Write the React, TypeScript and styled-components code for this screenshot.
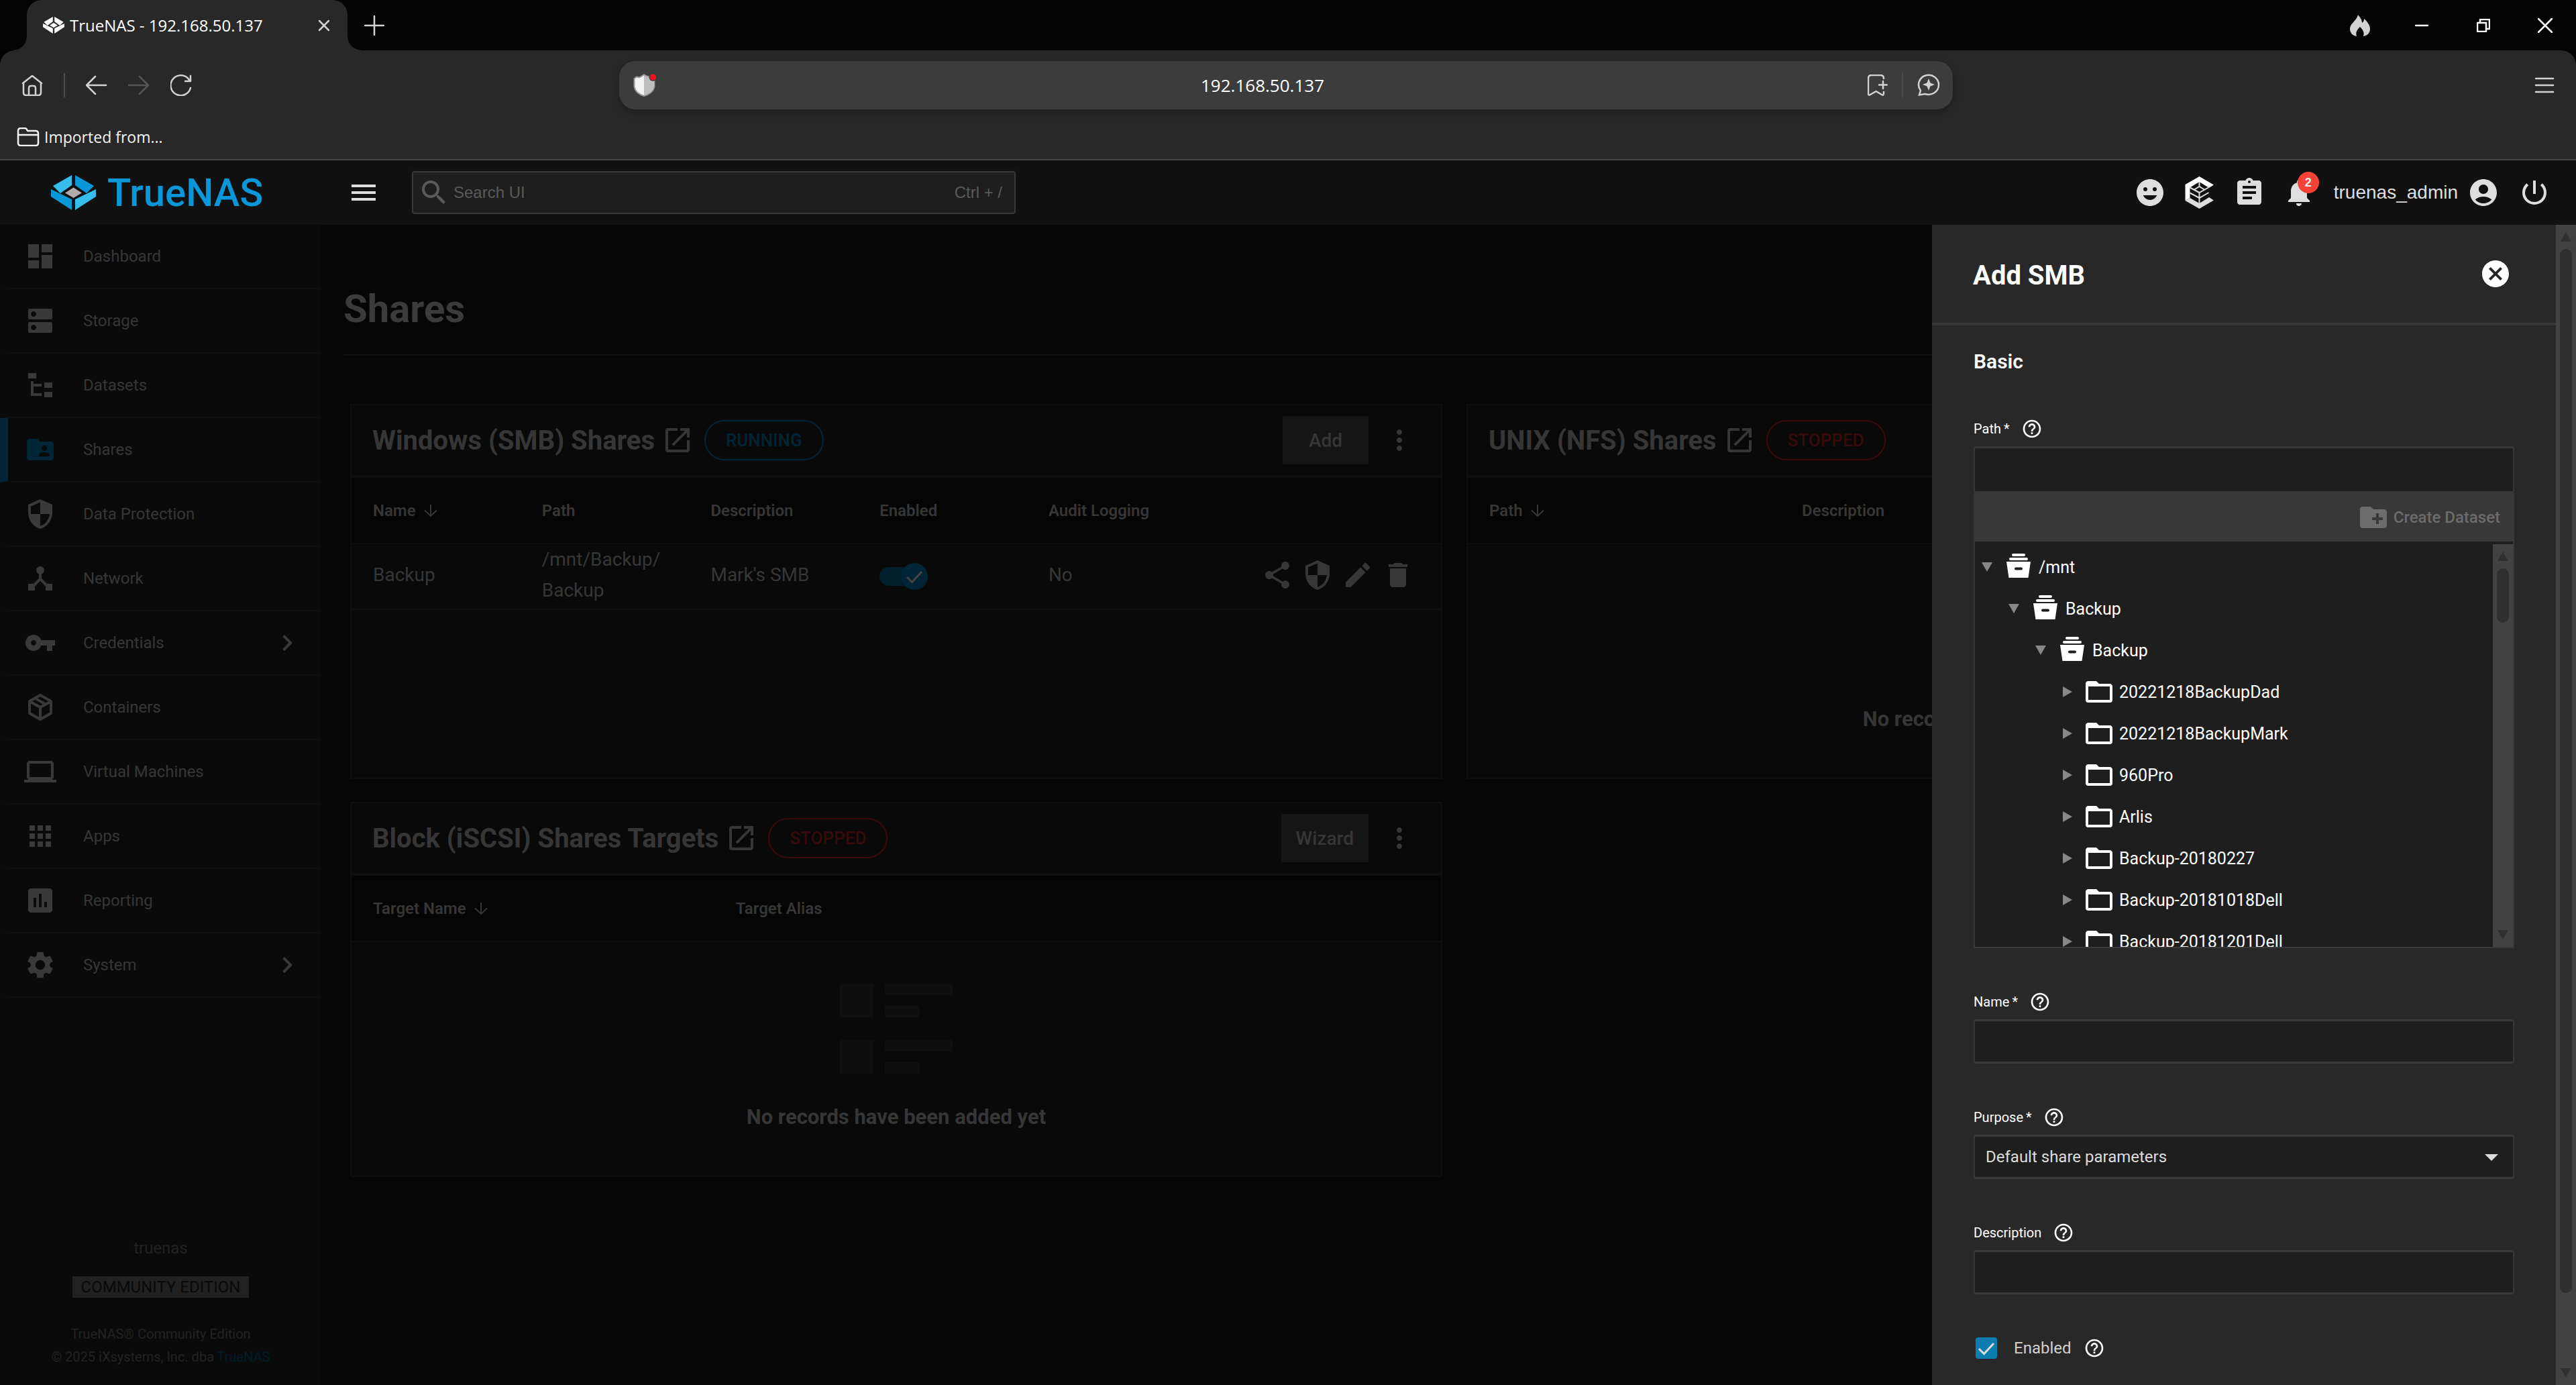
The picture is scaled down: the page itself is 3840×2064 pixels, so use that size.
import React from "react";
import styled, { createGlobalStyle, css } from "styled-components";
import {
  MdAccountCircle,
  MdApps,
  MdArrowDropDown,
  MdAssessment,
  MdAssignment,
  MdCancel,
  MdChevronRight,
  MdComputer,
  MdCreateNewFolder,
  MdDashboard,
  MdDelete,
  MdDeviceHub,
  MdDns,
  MdEdit,
  MdFolderShared,
  MdHelpOutline,
  MdMenu,
  MdMoreVert,
  MdNotifications,
  MdOpenInNew,
  MdPowerSettingsNew,
  MdSearch,
  MdSecurity,
  MdSettings,
  MdShare,
  MdVpnKey,
} from "react-icons/md";

const c = {
  chrome: "#282828",
  chromeIcon: "#d2d2d2",
  topBar: "#111111",
  topIcon: "#dedede",
  main: "#060606",
  side: "#0a0a0a",
  card: "#090909",
  tableHead: "#050505",
  line: "#0e0e0e",
  dimText: "#363636",
  dimIcon: "#393939",
  dimBlue: "#002536",
  dimRed: "#380a0a",
  panel: "#282828",
  field: "#1e1e1e",
  fieldLine: "#383838",
  track: "#424242",
  thumb: "#303030",
};

const bodyFont = `Roboto, "Liberation Sans", sans-serif`;
const chromeFont = `"Open Sans", "Noto Sans", sans-serif`;

const GlobalStyle = createGlobalStyle`
  *, *::before, *::after { box-sizing: border-box; }
  body { margin: 0; background: #000; font-family: ${bodyFont}; font-size: 24px; overflow: hidden; }
  button, input, select { font: inherit; color: inherit; background: none; border: 0; margin: 0; padding: 0; border-radius: 0; }
  h1, h2, h3, p, ul { margin: 0; padding: 0; }
  ul { list-style: none; }
  a { color: inherit; text-decoration: none; }
  svg { display: block; flex: none; }
`;

const Shell = styled.div`
  display: flex;
  flex-direction: column;
  height: 100vh;
`;

/* ---------- browser window ---------- */

const TabStrip = styled.header`
  display: flex;
  align-items: stretch;
  height: 75px;
  padding-left: 40px;
  background: #040404;
  color: #fff;
  font-family: ${chromeFont};
`;

const Tab = styled.div`
  position: relative;
  display: flex;
  align-items: center;
  gap: 8px;
  width: 478px;
  padding: 0 24px;
  font-size: 24px;
  background: ${c.chrome};
  border-radius: 22px 22px 0 0;
  &::before,
  &::after {
    content: "";
    position: absolute;
    bottom: 0;
    width: 20px;
    height: 20px;
  }
  &::before {
    left: -20px;
    background: radial-gradient(circle at 0 0, transparent 19px, ${c.chrome} 20px);
  }
  &::after {
    right: -20px;
    background: radial-gradient(circle at 100% 0, transparent 19px, ${c.chrome} 20px);
  }
`;

const TabTitle = styled.span`
  flex: 1;
  white-space: nowrap;
`;

const PlainButton = styled.button`
  display: flex;
  align-items: center;
  justify-content: center;
  color: ${c.chromeIcon};
  &:disabled {
    color: #555;
  }
`;

const NewTab = styled(PlainButton)`
  width: 80px;
`;

const WindowControls = styled.div`
  display: flex;
  margin-left: auto;
`;

const WindowButton = styled(PlainButton)`
  width: 92px;
  color: #fff;
`;

const ToolArea = styled.div`
  background: ${c.chrome};
  border-bottom: 2px solid #444;
  border-radius: 22px 22px 0 0;
  font-family: ${chromeFont};
`;

const NavRow = styled.div`
  display: grid;
  grid-template-columns: 923fr 1988fr 929fr;
  align-items: center;
  height: 104px;
`;

const NavButtons = styled.nav`
  display: flex;
  align-items: center;
  gap: 31px;
  padding-left: 32px;
`;

const Rule = styled.span`
  width: 2px;
  height: 36px;
  background: #4a4a4a;
`;

const AddressBar = styled.div`
  display: flex;
  align-items: center;
  height: 72px;
  padding: 0 19px 0 21px;
  border-radius: 24px;
  background: #3c3c3c;
  box-shadow: 0 4px 12px rgba(0, 0, 0, 0.25);
`;

const AddressInput = styled.input`
  flex: 1;
  min-width: 0;
  text-align: center;
  color: #fff;
  font-size: 26px;
`;

const AddressTools = styled.div`
  display: flex;
  align-items: center;
  gap: 21px;
`;

const MenuSlot = styled.div`
  display: flex;
  justify-content: flex-end;
  padding-right: 32px;
`;

const Bookmarks = styled.div`
  display: flex;
  height: 58px;
  padding: 0 25px 8px;
`;

const Bookmark = styled.a`
  display: flex;
  align-items: center;
  gap: 7px;
  color: #f4f4f4;
  font-size: 23px;
`;

/* ---------- application top bar ---------- */

const TopBar = styled.header`
  display: flex;
  align-items: center;
  height: 96px;
  padding-right: 25px;
  background: ${c.topBar};
  color: ${c.topIcon};
  font-family: "Liberation Sans", Arial, sans-serif;
`;

const Brand = styled.a`
  display: flex;
  align-items: center;
  gap: 17px;
  width: 518px;
  padding-left: 76px;
  color: #0a97d9;
  font-family: ${bodyFont};
  font-size: 58px;
  font-weight: 500;
  line-height: 60px;
`;

const IconButton = styled.button<{ $w?: number }>`
  display: flex;
  align-items: center;
  justify-content: center;
  width: ${(p) => p.$w ?? 48}px;
  height: 48px;
`;

const SearchBox = styled.label`
  display: flex;
  align-items: center;
  gap: 5px;
  width: 900px;
  height: 64px;
  margin: 0 auto 0 48px;
  padding: 0 18px 0 7px;
  border: 2px solid #3a3a3a;
  border-radius: 4px;
  background: ${c.field};
  color: #5a5a5a;
  input {
    flex: 1;
    min-width: 0;
  }
  input::placeholder {
    color: #5a5a5a;
    opacity: 1;
  }
`;

const BellWrap = styled.span`
  position: relative;
`;

const Badge = styled.span`
  position: absolute;
  top: -7px;
  right: -6px;
  width: 32px;
  height: 32px;
  border-radius: 50%;
  background: #f44336;
  color: #eee;
  font-size: 18px;
  font-weight: 700;
  line-height: 32px;
  text-align: center;
`;

const UserName = styled.span`
  margin: 0 14px 0 15px;
  font-size: 28px;
`;

const PowerSlot = styled.span`
  margin-left: 15px;
`;

/* ---------- sidebar ---------- */

const Body = styled.div`
  position: relative;
  display: flex;
  flex: 1;
  min-height: 0;
`;

const Sidebar = styled.aside`
  display: flex;
  flex-direction: column;
  justify-content: space-between;
  flex: 0 0 479px;
  background: ${c.side};
  color: ${c.dimText};
`;

const SideItem = styled.a<{ $active?: boolean }>`
  display: flex;
  align-items: center;
  height: 96px;
  padding: 0 27px 0 24px;
  border-left: 12px solid ${(p) => (p.$active ? c.dimBlue : "transparent")};
  border-bottom: 2px solid ${c.line};
  svg {
    color: ${(p) => (p.$active ? c.dimBlue : c.dimIcon)};
  }
`;

const SideLabel = styled.span`
  flex: 1;
  margin-left: 40px;
`;

const SideFooter = styled.footer`
  display: flex;
  flex-direction: column;
  align-items: center;
  padding-bottom: 25px;
  color: #222;
  line-height: 32px;
`;

const Edition = styled.span`
  margin: 26px 0 37px;
  padding: 0 13px;
  background: #212121;
  color: ${c.side};
`;

const Copyright = styled.p`
  font-size: 20px;
  line-height: 34px;
  text-align: center;
  a {
    color: #001c28;
  }
`;

/* ---------- shares page ---------- */

const Main = styled.main`
  flex: 1;
  min-width: 0;
  padding: 0 26px 0 33px;
  background: ${c.main};
  color: ${c.dimText};
  overflow: hidden;
`;

const PageTitle = styled.h1`
  padding: 92px 0 35px;
  border-bottom: 2px solid #101010;
  color: #3b3b3b;
  font-size: 58px;
  font-weight: 700;
  line-height: 66px;
`;

const CardGrid = styled.div`
  display: grid;
  grid-template-columns: 1fr 1fr;
  gap: 34px 36px;
  padding: 72px 0 0 10px;
`;

const Card = styled.section`
  min-height: 559px;
  border: 2px solid ${c.line};
  background: ${c.card};
`;

const CardHead = styled.div`
  display: flex;
  align-items: center;
  height: 108px;
  padding: 0 38px 0 31px;
  border-bottom: 4px solid ${c.line};
`;

const CardTitle = styled.h2`
  margin-right: 10px;
  font-size: 40px;
  font-weight: 700;
  white-space: nowrap;
`;

const Chip = styled.span<{ $on?: boolean }>`
  margin: 0 auto 0 16px;
  padding: 0 30px;
  border: 2px solid;
  border-radius: 30px;
  color: ${(p) => (p.$on ? c.dimBlue : c.dimRed)};
  font-size: 26px;
  font-weight: 500;
  line-height: 56px;
`;

const DimButton = styled.button`
  min-width: 128px;
  height: 72px;
  margin-right: 22px;
  padding: 0 22px;
  background: #151515;
  font-size: 28px;
  font-weight: 500;
`;

const Table = styled.table`
  width: 100%;
  border-collapse: collapse;
  table-layout: fixed;
  text-align: left;
`;

const Th = styled.th<{ $w?: string }>`
  width: ${(p) => p.$w ?? "auto"};
  height: 98px;
  padding: 0 0 0 32px;
  border-bottom: 2px solid ${c.line};
  background: ${c.tableHead};
  font-weight: 600;
`;

const SortLabel = styled.button`
  display: flex;
  align-items: center;
  gap: 12px;
`;

const Td = styled.td`
  height: 98px;
  padding: 0 0 4px 32px;
  border-bottom: 2px solid ${c.line};
  font-size: 28px;
  line-height: 46px;
`;

const RowActions = styled.div`
  display: flex;
  justify-content: flex-end;
  gap: 12px;
  padding-right: 40px;
`;

const Toggle = styled.label`
  position: relative;
  display: block;
  width: 72px;
  height: 40px;
  margin-top: 4px;
  input {
    appearance: none;
    position: absolute;
    inset: 6px 8px 6px 0;
    border-radius: 14px;
    background: #001f2d;
  }
`;

const Knob = styled.span`
  position: absolute;
  top: 0;
  right: 0;
  display: grid;
  place-items: center;
  width: 40px;
  height: 40px;
  border-radius: 50%;
  background: ${c.dimBlue};
`;

const Empty = styled.div`
  display: flex;
  flex-direction: column;
  align-items: center;
  gap: 46px;
  padding-top: 62px;
`;

const EmptyText = styled.p`
  font-size: 31px;
  font-weight: 700;
  line-height: 38px;
`;

/* ---------- Add SMB drawer ---------- */

const Drawer = styled.aside`
  position: absolute;
  inset: 0 0 0 auto;
  display: flex;
  width: 25%;
  background: ${c.panel};
  color: #fff;
`;

const DrawerBody = styled.div`
  flex: 1;
  min-width: 0;
  overflow: hidden;
`;

const DrawerHead = styled.div`
  display: flex;
  align-items: center;
  justify-content: space-between;
  height: 150px;
  padding: 0 66px 0 61px;
  border-bottom: 4px solid ${c.fieldLine};
  h2 {
    padding-top: 4px;
    font-size: 40px;
    font-weight: 700;
  }
`;

const Form = styled.form`
  display: flex;
  flex-direction: column;
  gap: 64px;
  padding: 34px 62px;
  h3 {
    font-size: 30px;
    font-weight: 600;
    line-height: 40px;
  }
`;

const LabelRow = styled.div`
  display: flex;
  align-items: center;
  gap: 17px;
  height: 32px;
  margin-bottom: 10px;
  font-size: 20px;
`;

const boxed = css`
  display: block;
  width: 100%;
  border: solid ${c.fieldLine};
  border-width: 3px 2px;
  border-radius: 4px;
  background: ${c.field};
`;

const TextInput = styled.input<{ $tall?: boolean }>`
  ${boxed}
  height: ${(p) => (p.$tall ? 70 : 66)}px;
  padding: 0 16px;
`;

const SelectBox = styled.div`
  display: grid;
  align-items: center;
  color: #dcdcdc;
  > * {
    grid-area: 1 / 1;
  }
  svg {
    justify-self: end;
    margin-right: 10px;
    pointer-events: none;
  }
`;

const Select = styled.select`
  ${boxed}
  appearance: none;
  height: 66px;
  padding: 0 16px;
`;

const TreeTools = styled.div`
  display: flex;
  justify-content: flex-end;
  padding: 0 21px;
  background: ${c.fieldLine};
`;

const CreateDataset = styled.button`
  display: flex;
  align-items: center;
  gap: 6px;
  height: 72px;
  color: #6c6c6c;
  font-weight: 500;
`;

const TreeBox = styled.div`
  display: flex;
  height: 606px;
  padding-top: 4px;
  border: 2px solid ${c.fieldLine};
  border-top: 0;
  background: ${c.field};
`;

const Tree = styled.ul`
  flex: 1;
  padding-top: 3px;
  overflow: hidden;
`;

const TreeRow = styled.li<{ $level: number }>`
  display: flex;
  align-items: center;
  height: 62px;
  padding-left: ${(p) => 10 + p.$level * 40}px;
  font-size: 25px;
`;

const Twisty = styled.button`
  width: 31px;
  color: #888;
`;

const NodeName = styled.span`
  margin-left: 6px;
`;

const Bar = styled.div`
  display: flex;
  flex-direction: column;
  align-items: center;
  width: 30px;
  background: ${c.track};
  color: ${c.thumb};
`;

const BarArrow = styled.span`
  display: grid;
  place-items: center;
  height: 36px;
`;

const BarTrack = styled.div`
  flex: 1;
  width: 18px;
`;

const Thumb = styled.div<{ $size: string }>`
  height: ${(p) => p.$size};
  border-radius: 9px;
  background: ${c.thumb};
`;

const CheckRow = styled.div`
  display: flex;
  align-items: center;
  gap: 18px;
  padding-left: 3px;
  color: #d0d0d0;
  label {
    display: flex;
    align-items: center;
    gap: 25px;
  }
  > svg {
    color: #fff;
  }
`;

const CheckBox = styled.span`
  display: grid;
  > * {
    grid-area: 1 / 1;
  }
  input {
    appearance: none;
    width: 32px;
    height: 32px;
    border-radius: 4px;
    background: #0b7dae;
  }
  svg {
    pointer-events: none;
  }
`;

/* ---------- drawings ---------- */

const Mark = ({ w, h, a, b, d }: { w: number; h: number; a: string; b: string; d: string }) => (
  <svg width={w} height={h} viewBox="0 0 67 52">
    <path fill={a} d="M31 0 V15 L14 27 L3 16 Z M36 52 V36 L67 21 V32 Z" />
    <path fill={b} d="M36 0 V15 L53 27 L64 16 Z M31 52 V36 L0 21 V32 Z" />
    <path fill={d} d="M33.5 18.5 L46 26.5 L33.5 34 L21 26.5 Z" />
  </svg>
);

const MaterialPath = ({ d, size = 48 }: { d: string; size?: number }) => (
  <svg width={size} height={size} viewBox="0 0 24 24" fill="currentColor">
    <path d={d} />
  </svg>
);

const TreeIcon = () => (
  <MaterialPath d="M3 3h6v4H3V3m12 7h6v4h-6v-4m0 7h6v4h-6v-4m-2-4H7v5h6v2H5V9h2v2h6v2z" />
);
const PackageIcon = () => (
  <MaterialPath d="M21 16.5c0 .38-.21.71-.53.88l-7.9 4.44c-.16.12-.36.18-.57.18s-.41-.06-.57-.18l-7.9-4.44A.991.991 0 0 1 3 16.5v-9c0-.38.21-.71.53-.88l7.9-4.44c.16-.12.36-.18.57-.18s.41.06.57.18l7.9 4.44c.32.17.53.5.53.88v9M12 4.15l-1.89 1.07L16 8.61l1.96-1.11L12 4.15M6.04 7.5L12 10.85l1.96-1.1-5.88-3.4L6.04 7.5M5 15.91l6 3.38v-6.71L5 9.21v6.7m14 0v-6.7l-6 3.37v6.71l6-3.38z" />
);
const FolderIcon = () => (
  <MaterialPath d="M20 18H4V8h16m0-2h-8l-2-2H4c-1.11 0-2 .89-2 2v12a2 2 0 0 0 2 2h16a2 2 0 0 0 2-2V8c0-1.11-.9-2-2-2z" />
);
const SmileIcon = () => (
  <MaterialPath d="M12 2C6.47 2 2 6.47 2 12s4.47 10 10 10 10-4.48 10-10S17.52 2 12 2M8.5 8A1.5 1.5 0 0 1 10 9.5 1.5 1.5 0 0 1 8.5 11 1.5 1.5 0 0 1 7 9.5 1.5 1.5 0 0 1 8.5 8M12 17.5c-2.33 0-4.31-1.5-5.11-3.5h10.22c-.8 2-2.78 3.5-5.11 3.5M15.5 11A1.5 1.5 0 0 1 14 9.5 1.5 1.5 0 0 1 15.5 8 1.5 1.5 0 0 1 17 9.5 1.5 1.5 0 0 1 15.5 11z" />
);
const DatasetIcon = () => (
  <svg width="48" height="48" viewBox="0 0 48 48" fill="currentColor">
    <rect x="14" y="4" width="20" height="4" rx="2" />
    <rect x="10" y="10" width="28" height="4" rx="2" />
    <path
      fillRule="evenodd"
      d="M6 16 H42 L38.5 40 H9.5 Z M20 24.5 a2 2 0 0 0 0 4 h8 a2 2 0 0 0 0-4 Z"
    />
  </svg>
);
const CommandIcon = () => (
  <svg width="44" height="50" viewBox="17 17 44 50">
    <path fill="#fff" d="M38.5 18 L60 30.5 L53 35 L38.5 26 L24.5 34.5 V50 L17.5 54 V30 Z" />
    <path fill="#dedede" d="M17.5 54 L24.5 50 L38.5 58 L53 49 L60 53.5 L38.5 66 Z" />
    <path
      fill="none"
      stroke="#dedede"
      strokeWidth="2"
      d="M38.5 26 V34 M38.5 42 V58 M24.5 34.5 L38.5 42 L52 34.5 M31 37.5 L38.5 33 L46 37.5 M24.5 42.5 L38.5 50 L52.5 42"
    />
  </svg>
);
const SortArrow = () => (
  <svg width="20" height="20" viewBox="0 0 20 20" fill="none" stroke="currentColor" strokeWidth="2">
    <path d="M10 1 V18 M1 9.5 L10 18 L19 9.5" />
  </svg>
);
const Check = ({ color, size }: { color: string; size: number }) => (
  <svg width={size} height={size} viewBox="0 0 32 32" fill="none" stroke={color} strokeWidth="3">
    <path d="M5 17 L12.5 24.5 L27 9" />
  </svg>
);
const Triangle = ({ dir }: { dir: "up" | "down" | "right" }) => (
  <svg width="16" height="16" viewBox="0 0 16 16" fill="currentColor">
    <path
      d={dir === "up" ? "M8 1 L16 15 H0 Z" : dir === "down" ? "M0 1 H16 L8 15 Z" : "M1 0 L15 8 L1 16 Z"}
    />
  </svg>
);
const Line = ({ d, w = 32, h = 32 }: { d: string; w?: number; h?: number }) => (
  <svg
    width={w}
    height={h}
    viewBox={`0 0 ${w} ${h}`}
    fill="none"
    stroke="currentColor"
    strokeWidth="2.5"
    strokeLinecap="round"
    strokeLinejoin="round"
  >
    <path d={d} />
  </svg>
);
const ShieldIcon = () => (
  <svg width="36" height="34" viewBox="0 0 36 34">
    <path
      fill="#f2f2f2"
      stroke="#9a9a9a"
      strokeWidth="2"
      d="M16 1.5 L21 4 H25 L31.5 8 V18 C31 26 23 31 16 33 C9 31 2 26 1.5 18 V7 L5 4.5 L9 5.5 Z"
    />
    <path fill="#bdbdbd" d="M16 2.5 L21 5 H25 L30.5 9 V18 C30 25 23 30 16 32 Z" />
    <circle cx="29.5" cy="5" r="6" fill="#3c3c3c" />
    <circle cx="29.5" cy="5" r="4.5" fill="#f5101f" />
  </svg>
);
const Skeleton = () => (
  <svg width="168" height="134" viewBox="0 0 168 134" fill="#0f0f0f">
    <path d="M0 0H50V50H0Z M67 0H168V17H67Z M67 33H118V50H67Z M0 84H50V134H0Z M67 84H168V101H67Z M67 117H118V134H67Z" />
  </svg>
);

/* ---------- composed parts ---------- */

const ScrollBar = ({ size }: { size: string }) => (
  <Bar aria-hidden="true">
    <BarArrow>
      <Triangle dir="up" />
    </BarArrow>
    <BarTrack>
      <Thumb $size={size} />
    </BarTrack>
    <BarArrow>
      <Triangle dir="down" />
    </BarArrow>
  </Bar>
);

const FieldLabel = ({ id, text, required }: { id: string; text: string; required?: boolean }) => (
  <LabelRow>
    <label htmlFor={id}>
      {text}
      {required && "\u2009*"}
    </label>
    <MdHelpOutline size={32} />
  </LabelRow>
);

const menu: { label: string; icon: React.ReactNode; active?: boolean; more?: boolean }[] = [
  { label: "Dashboard", icon: <MdDashboard size={48} /> },
  { label: "Storage", icon: <MdDns size={48} /> },
  { label: "Datasets", icon: <TreeIcon /> },
  { label: "Shares", icon: <MdFolderShared size={48} />, active: true },
  { label: "Data Protection", icon: <MdSecurity size={48} /> },
  { label: "Network", icon: <MdDeviceHub size={48} /> },
  { label: "Credentials", icon: <MdVpnKey size={48} />, more: true },
  { label: "Containers", icon: <PackageIcon /> },
  { label: "Virtual Machines", icon: <MdComputer size={48} /> },
  { label: "Apps", icon: <MdApps size={48} /> },
  { label: "Reporting", icon: <MdAssessment size={48} /> },
  { label: "System", icon: <MdSettings size={48} />, more: true },
];

const nodes = [
  { name: "/mnt", level: 0 },
  { name: "Backup", level: 1 },
  { name: "Backup", level: 2 },
  { name: "20221218BackupDad", level: 3 },
  { name: "20221218BackupMark", level: 3 },
  { name: "960Pro", level: 3 },
  { name: "Arlis", level: 3 },
  { name: "Backup-20180227", level: 3 },
  { name: "Backup-20181018Dell", level: 3 },
  { name: "Backup-20181201Dell", level: 3 },
];

const CardHeader = ({ title, running, action }: { title: string; running?: boolean; action: string }) => (
  <CardHead>
    <CardTitle>{title}</CardTitle>
    <IconButton aria-label={`Open ${title}`}>
      <MdOpenInNew size={48} />
    </IconButton>
    <Chip $on={running}>{running ? "RUNNING" : "STOPPED"}</Chip>
    <DimButton>{action}</DimButton>
    <IconButton aria-label="More">
      <MdMoreVert size={48} />
    </IconButton>
  </CardHead>
);

const EmptyState = () => (
  <Empty>
    <Skeleton />
    <EmptyText>No records have been added yet</EmptyText>
  </Empty>
);

export default function App() {
  return (
    <Shell>
      <GlobalStyle />
      <TabStrip>
        <Tab>
          <Mark w={32} h={25} a="#fff" b="#fff" d="#fff" />
          <TabTitle>TrueNAS - 192.168.50.137</TabTitle>
          <PlainButton aria-label="Close tab">
            <Line w={22} h={22} d="M4 4 L18 18 M18 4 L4 18" />
          </PlainButton>
        </Tab>
        <NewTab aria-label="New tab">
          <Line w={30} h={30} d="M15 1 V29 M1 15 H29" />
        </NewTab>
        <WindowControls>
          <WindowButton aria-label="Clear browsing data">
            <svg width="30" height="32" viewBox="0 0 30 32" fill="#d2d2d2">
              <path d="M12 0 C14 3 18 6 18 12 C20 11 21 9 21 6 C26 10 30 16 30 21 C30 27 26 31 20 32 C22 26 19 22 15 18 C11 22 8 26 10 32 C4 31 0 27 0 21 C0 13 10 9 12 0 Z" />
            </svg>
          </WindowButton>
          <WindowButton aria-label="Minimize">
            <Line w={20} h={20} d="M1 10 H19" />
          </WindowButton>
          <WindowButton aria-label="Restore">
            <Line w={20} h={20} d="M1 6 H14 V19 H1 Z M5 6 V1 H19 V15 H14" />
          </WindowButton>
          <WindowButton aria-label="Close">
            <Line w={22} h={22} d="M1 1 L21 21 M21 1 L1 21" />
          </WindowButton>
        </WindowControls>
      </TabStrip>

      <ToolArea>
        <NavRow>
          <NavButtons>
            <PlainButton aria-label="Home">
              <Line d="M2 13 L16 2 L30 13 M3 12 V27 Q3 31 7 31 H25 Q29 31 29 27 V12 M11 31 V20 Q11 17 14 17 H18 Q21 17 21 20 V31" />
            </PlainButton>
            <Rule />
            <PlainButton aria-label="Back">
              <Line d="M30 16 H2 M14 3 L1 16 L14 29" />
            </PlainButton>
            <PlainButton aria-label="Forward" disabled>
              <Line d="M1 16 H29 M17 3 L30 16 L17 29" />
            </PlainButton>
            <PlainButton aria-label="Reload">
              <Line d="M30 20 A15 15 0 1 1 28 8 M30 2 V10 H22" />
            </PlainButton>
          </NavButtons>
          <AddressBar>
            <ShieldIcon />
            <AddressInput aria-label="Address" defaultValue="192.168.50.137" />
            <AddressTools>
              <PlainButton aria-label="Bookmark">
                <Line w={30} d="M24 6 Q24 1 19 1 H6 Q1 1 1 6 V28 Q1 32 4 30 L12.5 25 L21 30 Q24 32 24 28 V26 M23 10 V21 M17 15.5 H29" />
              </PlainButton>
              <Rule />
              <PlainButton aria-label="Assistant">
                <svg width="34" height="34" viewBox="0 0 34 34" fill="none" stroke="currentColor" strokeWidth="2.5">
                  <path d="M3 31.5 L5 25 A15 14.5 0 1 1 12 30 Z" />
                  <path fill="currentColor" stroke="none" d="M17 7 L19.5 13.5 L26 16 L19.5 18.5 L17 25 L14.5 18.5 L8 16 L14.5 13.5 Z" />
                </svg>
              </PlainButton>
            </AddressTools>
          </AddressBar>
          <MenuSlot>
            <PlainButton aria-label="Menu">
              <Line w={30} h={24} d="M2 2 H28 M2 12 H28 M2 22 H28" />
            </PlainButton>
          </MenuSlot>
        </NavRow>
        <Bookmarks>
          <Bookmark href="#imported">
            <Line w={34} h={28} d="M2 9 V5 Q2 1 6 1 H12 Q14 1 15 3 L16 5 H28 Q32 5 32 9 V23 Q32 27 28 27 H6 Q2 27 2 23 Z M2 11 H32" />
            Imported from...
          </Bookmark>
        </Bookmarks>
      </ToolArea>

      <TopBar>
        <Brand href="#home">
          <Mark w={67} h={52} a="#35bdee" b="#0a97d9" d="#b0acae" />
          TrueNAS
        </Brand>
        <IconButton aria-label="Toggle menu">
          <MdMenu size={48} />
        </IconButton>
        <SearchBox>
          <MdSearch size={48} />
          <input type="text" placeholder="Search UI" aria-label="Search UI" />
          <span>Ctrl + /</span>
        </SearchBox>
        <IconButton $w={74} aria-label="Feedback">
          <SmileIcon />
        </IconButton>
        <IconButton $w={74} aria-label="TrueCommand">
          <CommandIcon />
        </IconButton>
        <IconButton $w={74} aria-label="Jobs">
          <MdAssignment size={48} />
        </IconButton>
        <IconButton $w={74} aria-label="Alerts">
          <BellWrap>
            <MdNotifications size={48} />
            <Badge>2</Badge>
          </BellWrap>
        </IconButton>
        <UserName>truenas_admin</UserName>
        <IconButton aria-label="Account">
          <MdAccountCircle size={48} />
        </IconButton>
        <PowerSlot>
          <IconButton $w={74} aria-label="Power">
            <MdPowerSettingsNew size={48} />
          </IconButton>
        </PowerSlot>
      </TopBar>

      <Body>
        <Sidebar>
          <nav>
            {menu.map((m) => (
              <SideItem key={m.label} href={`#${m.label}`} $active={m.active}>
                {m.icon}
                <SideLabel>{m.label}</SideLabel>
                {m.more && <MdChevronRight size={48} />}
              </SideItem>
            ))}
          </nav>
          <SideFooter>
            <span>truenas</span>
            <Edition>COMMUNITY EDITION</Edition>
            <Copyright>
              TrueNAS® Community Edition
              <br />© 2025 iXsystems, Inc. dba <a href="#truenas">TrueNAS</a>
            </Copyright>
          </SideFooter>
        </Sidebar>

        <Main>
          <PageTitle>Shares</PageTitle>
          <CardGrid>
            <Card>
              <CardHeader title="Windows (SMB) Shares" running action="Add" />
              <Table>
                <thead>
                  <tr>
                    <Th $w="15.5%">
                      <SortLabel>
                        Name <SortArrow />
                      </SortLabel>
                    </Th>
                    <Th $w="15.5%">Path</Th>
                    <Th $w="15.5%">Description</Th>
                    <Th $w="15.5%">Enabled</Th>
                    <Th $w="15.5%">Audit Logging</Th>
                    <Th />
                  </tr>
                </thead>
                <tbody>
                  <tr>
                    <Td>Backup</Td>
                    <Td>
                      /mnt/Backup/
                      <br />
                      Backup
                    </Td>
                    <Td>Mark's SMB</Td>
                    <Td>
                      <Toggle>
                        <input type="checkbox" defaultChecked aria-label="Enabled" />
                        <Knob>
                          <Check size={32} color="#454545" />
                        </Knob>
                      </Toggle>
                    </Td>
                    <Td>No</Td>
                    <Td>
                      <RowActions>
                        <IconButton aria-label="Share ACL">
                          <MdShare size={48} />
                        </IconButton>
                        <IconButton aria-label="Filesystem ACL">
                          <MdSecurity size={48} />
                        </IconButton>
                        <IconButton aria-label="Edit">
                          <MdEdit size={48} />
                        </IconButton>
                        <IconButton aria-label="Delete">
                          <MdDelete size={48} />
                        </IconButton>
                      </RowActions>
                    </Td>
                  </tr>
                </tbody>
              </Table>
            </Card>

            <Card>
              <CardHeader title="UNIX (NFS) Shares" action="Add" />
              <Table>
                <thead>
                  <tr>
                    <Th $w="28.7%">
                      <SortLabel>
                        Path <SortArrow />
                      </SortLabel>
                    </Th>
                    <Th>Description</Th>
                  </tr>
                </thead>
              </Table>
              <EmptyState />
            </Card>

            <Card>
              <CardHeader title="Block (iSCSI) Shares Targets" action="Wizard" />
              <Table>
                <thead>
                  <tr>
                    <Th $w="33.3%">
                      <SortLabel>
                        Target Name <SortArrow />
                      </SortLabel>
                    </Th>
                    <Th>Target Alias</Th>
                  </tr>
                </thead>
              </Table>
              <EmptyState />
            </Card>
          </CardGrid>
        </Main>

        <Drawer>
          <DrawerBody>
            <DrawerHead>
              <h2>Add SMB</h2>
              <IconButton aria-label="Close">
                <MdCancel size={48} />
              </IconButton>
            </DrawerHead>
            <Form>
              <h3>Basic</h3>
              <div>
                <FieldLabel id="path" text="Path" required />
                <TextInput id="path" type="text" $tall />
                <TreeTools>
                  <CreateDataset type="button" disabled>
                    <MdCreateNewFolder size={48} />
                    Create Dataset
                  </CreateDataset>
                </TreeTools>
                <TreeBox>
                  <Tree>
                    {nodes.map((n, i) => (
                      <TreeRow key={i} $level={n.level}>
                        <Twisty type="button" aria-label="Expand">
                          <Triangle dir={n.level < 3 ? "down" : "right"} />
                        </Twisty>
                        {n.level < 3 ? <DatasetIcon /> : <FolderIcon />}
                        <NodeName>{n.name}</NodeName>
                      </TreeRow>
                    ))}
                  </Tree>
                  <ScrollBar size="15.4%" />
                </TreeBox>
              </div>
              <div>
                <FieldLabel id="name" text="Name" required />
                <TextInput id="name" type="text" />
              </div>
              <div>
                <FieldLabel id="purpose" text="Purpose" required />
                <SelectBox>
                  <Select id="purpose">
                    <option>Default share parameters</option>
                  </Select>
                  <MdArrowDropDown size={48} />
                </SelectBox>
              </div>
              <div>
                <FieldLabel id="description" text="Description" />
                <TextInput id="description" type="text" />
              </div>
              <CheckRow>
                <label>
                  <CheckBox>
                    <input type="checkbox" defaultChecked />
                    <Check size={32} color="#dcdcdc" />
                  </CheckBox>
                  Enabled
                </label>
                <MdHelpOutline size={32} />
              </CheckRow>
            </Form>
          </DrawerBody>
          <ScrollBar size="93.9%" />
        </Drawer>
      </Body>
    </Shell>
  );
}
